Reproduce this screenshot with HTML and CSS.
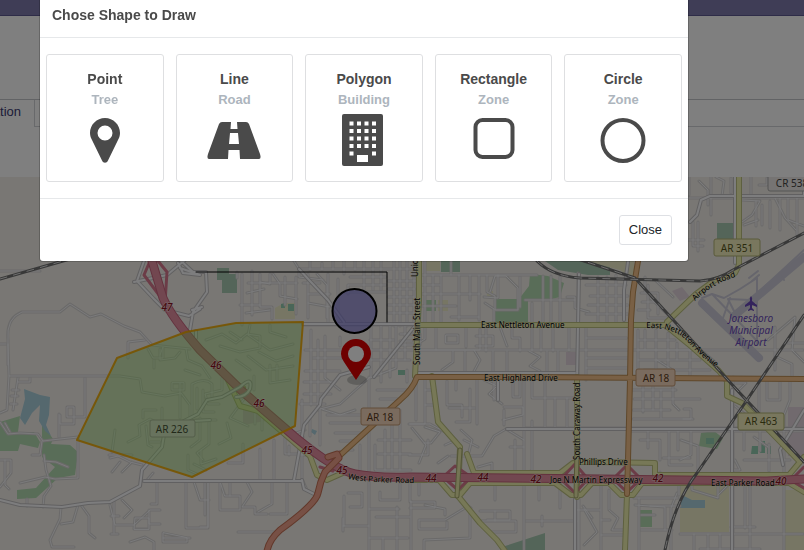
FILE: index.html
```html
<!DOCTYPE html>
<html lang="en">
<head>
<meta charset="utf-8">
<meta name="viewport" content="width=device-width, initial-scale=1">
<title>Chose Shape to Draw</title>
<link rel="stylesheet" href="styles.css">
</head>
<body>
<div class="page">
  <header class="topbar"></header>
  <div class="heading"></div>
  <nav class="tabs"><a class="tab" href="#map">ation</a><span class="tab-rest"></span></nav>
  <main class="map-wrap" id="map">
    <svg class="map" viewBox="0 177 804 373" preserveAspectRatio="xMinYMin slice" role="img" aria-label="Street map of Jonesboro">
      <defs>
        <path id="minor" d="M0 271H40M0 344H6M8 365V340Q6 318 22 312H60L70 304L90 317L101 314L124 326L140 332L152 345L190 349M128 358V342L145 340M8 344L9 376H120L140 379L142 392L165 396L181 393L190 405V432M85 378V417H67V407H74V424H60V415M59 414V437M9 376L7 410L0 413M18 378L13 410M18 382H30V378M12 390H19M11 396H18M10 404H17M0 422L8 434L20 433L38 434L43 441M5 423L10 432M43 441L60 439L78 437M78 437V478L55 479L45 477L20 483M32 455L40 455L42 441M44 455L46 470L51 486L44 496L43 507M44 461L56 462L68 467M0 460H11V473L0 487M5 460V485L9 489M27 499V506M61 507L60 519L50 540L52 547H74M61 524L73 522L78 505M81 505L89 516V533L95 538M110 458L118 456L130 462L142 465M109 455H132M132 462L122 472M112 472L120 462M115 430L112 452M114 500V533M110 505L115 525H134L150 510H160M111 516H119M111 534H118M122 500L132 510L124 518M134 529L135 518H149V529ZM149 510V524H160M130 542L145 537L154 542V550M157 482V504H151M163 538H190M163 533V542H187V538ZM147 480L153 473M186 482V528H208V482M194 482L200 500H209M205 482V515M150 442H160M143 418V410H156M162 408V425L150 419L139 425L140 436L128 442M146 426L148 445L152 447M172 383V390H184V383ZM180 383V418M192 384V416M192 384Q205 377 212 384V398M197 388V409M203 390V412H214M154 360V368M148 349L153 358H163V347L160 355M160 349V360L175 358L180 352M186 349L188 360L202 366L210 378M185 370L200 375M206 340L222 334L236 343L247 334L260 336V348L240 352L220 346M230 332L242 340M250 325L248 335L270 350L293 344M270 325V332L286 337M259 352L276 361L293 356M248 356L266 370L293 366M270 365V383L290 380M277 365V380M236 360L250 370M254 376V390M222 378V390L205 394L208 404H219M244 399L230 418L248 426M255 404V424M262 409V430M227 423L231 438L219 444M195 420H216M200 418V440L191 447M209 422V444L197 453L203 460M188 455V470L197 474M201 450V464L216 459M194 464L206 470M237 272V278M242 274V325M252 271V315M260 274V307H272V319M270 274V284L260 282M248 283H297M247 293L264 289M273 274L280 284V296L297 299M285 277V305M296 277V314M240 305H260M246 313L270 310M308 274V318M303 283H320M308 294H330M308 303L330 307M317 274L327 285V318M328 274V325M338 279V325M348 285V294M303 325H414M394 261V326M400 261V326M407 261V326M414 261V326M388 281H416M388 289H415M388 297H414M388 305H414M388 313H414M300 269H417M294 261L299 269L299 277L323 280M310 261V270M322 263V270M333 261V270M344 261V274M355 261V270M364 261V290M373 261V290M381 261V290M350 277H386M348 285H386M344 292H386M371 325V377M381 325V382M390 325V377M396 325V368L370 378M405 325V360M311 330V405M318 340V410M325 336V378M305 350H350M313 358H342M305 371H340M304 382H335M304 394H331M300 404H325M340 337V346M370 340H394M371 350H400M371 360H410M377 390H408M380 399H401M370 377L340 404L320 409M369 377V550M325 378L340 390M310 418V436M320 400V445M302 400L302 480M290 435L305 430M278 428L287 437H303M285 438V454H303M289 446V455M300 455H310M243 444V463H228M260 449V480M274 440V480M207 481H303M303 481L307 490L318 496M208 482V527H200M220 482V510H240V496H225ZM230 482V496M247 482L252 492L242 507H255V514H267M272 482V504L258 512M287 482V514H270M238 532H276M322 409L340 415L355 410M327 415H368M330 423H365M335 433H361M340 441H358M345 450H353M360 445V470M348 493H362V507H350M344 496V526M375 445V470H411M385 430V470M392 415V470M400 410V470M378 440H411M378 454H411M380 492V500H400V484M369 509H399M376 517H410M343 526H369M343 518V531M369 538H408M383 538V550M397 507V550M411 501V550"/>
        <path id="minor-east" d="M419 275H537M425 261V324M433 275V324M441 275V325M451 261V275M459 275V320M470 275V300M479 275V320M419 285H440M419 294H480M419 306H456M451 317H479M484 297L498 298V275M487 275V292L495 296V310H518V288L506 276H495L490 292M520 277V307M485 303L494 309V323M400 334H420V345H400M400 341H412M400 350H416M425 327V339L414 346M419 350H480V329M436 327V350M446 335H458V343H446ZM466 327V347M476 336H493V346H476M486 327V351M500 327L507 346M512 327V338H520V351M532 327V351M541 327V351M553 327V351M414 350H803M567 297H575V308L589 312M560 277V324M551 276V324M543 276V324M532 303V324M525 300H575M569 327V351M586 327V380M598 277V325M607 277V325M616 275V325M578 273V550M586 285H626M590 296H628M588 305H628M586 314H628M586 338H627M586 358H629M586 368H628M453 351V362L442 370M465 351V375M474 350L480 360L472 375M493 351V375M507 351V375M529 351L540 357L530 366L540 371V376M547 351V375M558 351V375M407 370V382M425 378V424H409M416 382V420M425 390H435M425 405H436M410 424H430M430 424L445 432M447 381V405H462V417M449 408H475M470 389V422H456M456 380V390M477 377V424M484 380L497 386L489 394L502 404M494 378V400M504 410V425M504 407H523V415L503 420M513 380V397H520V378M524 377V550M532 377V398H576M525 428H803M524 440L506 429L494 436L482 456H451M532 421V470L524 477M524 447H510M515 440V470M545 378V427M555 398V427M567 398V427M425 427L440 432L431 443H424M412 428L426 445L419 463M409 455H428V440M445 445L456 440M461 430L472 440L469 452M464 440L478 447M438 463L448 456M478 467L492 463V475M410 483V502H435V508H410M419 483V495M425 505L445 509V515M495 483V500M539 483V500M560 483V508M419 520H445L465 508M419 520V529H447V522M424 550V540L470 538V509M460 500L471 508M480 511H510V520H487M480 521H516V532H490M495 511V521M526 521H577M542 516V526M577 510H600M579 494V550M584 509L597 532L584 545M583 506L592 518M648 285V318H667M641 293H658V314M650 298L668 315M642 302H658M655 280L673 297M645 277V292M638 310H650M638 330V375M645 330V350M656 330V378M668 333V378M677 343V360M690 350V378M638 340H675M638 350H701L715 362M638 360H700M657 360L671 369M644 370H710M632 390H676M634 399H700M633 410H670M633 419H693M643 382V412M653 386V410M661 390V418M673 380V404L679 410M684 409H691V419H683M631 431H803M678 431V450M691 431V455L680 460M640 440H660V460M648 430V448M669 431V465H692M681 440L698 446V470M663 458H690M660 472V482M634 498H678M639 498V550M650 506H680M641 515H655M641 530H672M677 493L671 508V550M679 484V495M692 483V490L718 498V483M733 377V550M735 383H746L738 391M735 406L748 417V428M759 378V428M767 378V400H780V382M790 378V400L784 415V550M735 460L740 470H733M735 475L728 485L718 495M731 527H755M745 483V528M760 430V451M769 444V471M744 432V450M754 437L768 447M744 460H790M680 534H803M694 534V550M708 534V550M720 534V550M750 485V550M700 549H760M601 483V550M609 510L618 518L612 530H623M601 520H610M601 535H625M609 490V509M635 505L665 507V530M768 340L795 317L792 350L804 362M777 357L792 364V379M788 343H804M775 327V370M689 177V195M699 181L708 190V205M711 177V215M716 177L724 181L722 196M731 178V193M688 198H804M751 177V198M759 185H767V178M775 198L785 218L796 230M780 198V230M788 198V220L804 226M797 198V235M742 200L760 201L752 215L742 222M756 201V226M744 225L758 220M762 205V225M770 201V228M693 222V246H703M698 222V251M688 240H704"/>
        <path id="streets" d="M144 261L137 281L154 299L165 310L189 316L200 309M134 282L167 275L185 260M178 263L183 273L200 275L180 268M180 260L193 272L206 272L207 292L193 312L190 330M303 324L415 324M299 269L310 281L328 300L344 322M196 331V338M192 310L202 307M414 327L374 377M294 480L304 425L320 405L321 399L340 375L369 367M302 480L304 489L318 496M144 481H302M0 500L20 505L62 507L88 503L110 502L140 486L142 470L162 447L164 435M193 421L210 420M545 378H577M507 429H804M415 373H575M575 497V550M732 390V550M498 377V400M735 177V263M690 222L697 215L701 200L710 196H804V188M579 274L577 380M628 262L624 290V320M804 410L780 450L783 465"/>
        <path id="yellow-roads" d="M419 261V300L415 376M419 325H665L692 347L719 371L727 381V396L742 403L760 421L800 462M667 322L696 294L715 280L735 273L739 265V177M432 376L438 422L460 447L458 496L480 523L497 540L505 551M577 377V497M577 462H600L655 463V477M467 454L474 473H560L573 463M410 480H439L452 495H460L470 483H555L571 495H581L592 483H609L621 495H633L642 483H789L804 492M655 475H789L804 457M627 494L625 550M243 388L228 380L240 406L258 411L310 456L317 475L327 480L345 472"/>
      </defs>
      <rect class="land" y="177" width="804" height="373"/>
      <g class="park">
        <path d="M0 422L20 416L18 432H34L40 442L38 448L20 444L18 451L0 451ZM42 423L53 439L51 444L70 445L78 452L75 475L58 478L36 498L17 499V490L36 488L55 467L42 457Z"/>
        <path d="M494 299H519L529 286L530 274L548 276L564 283L560 297L547 300L528 300V322H494Z"/>
        <path d="M701 433L714 431L723 438L717 449L699 446ZM424 300H436V311H424ZM638 510H652V527H638Z"/>
      </g>
      <g class="wood"><path d="M217 268H229V274H237V293H222V280H217ZM441 261H460V272H441ZM717 223H736V241H717ZM545 261H610V275L588 275L558 270ZM505 546L545 533V550H505Z"/></g>
      <g class="field"><path d="M275 308L284 303H295V319H275ZM426 261H440V271H426ZM438 300H448V311H438ZM487 291H493V297H487ZM680 485H729V532H680ZM586 261H634V281L620 270ZM785 490H804V550H785Z"/></g>
      <g class="water"><path d="M24 389L40 395L50 397L49 415L46 425L51 436L45 431L39 421L40 405L32 413L25 425L20 418L25 399ZM682 495L692 500H705V508H680ZM312 429L317 431L315 435L311 432Z"/></g>
      <g class="pitch"><path d="M281 304L285 303V308H281ZM288 304H294V311H288ZM398 370H405V375H398ZM752 446H758V454H751ZM760 441H765V453H760ZM767 446H771V454H767ZM706 438H714V444H706Z"/></g>
      <g class="retail"><path d="M243 405L265 409L266 421L243 425ZM566 352H578V365H566ZM672 291L682 287L690 297L680 301ZM788 407H804V456H788Z"/></g>
      <use class="minor-case" href="#minor"/><use class="minor-case" href="#minor-east"/>
      <use class="minor-line" href="#minor"/><use class="minor-line" href="#minor-east"/>
      <g class="runway">
        <path class="runway-main" d="M804 257L734 316M702 303L759 358"/>
        <path class="taxiway" d="M702 298L712 294L724 298L740 289L757 278V345M804 250L750 300L728 299L737 317M723 318L730 298M700 305L756 358M712 294L760 344M749 278L758 271M752 281L759 275M779 273L784 280"/>
      </g>
      <use class="street-case" href="#streets"/><use class="street-line" href="#streets"/>
      <use class="yellow-case" href="#yellow-roads"/><use class="yellow-line" href="#yellow-roads"/>
      <g class="ramp"><path d="M150 261L144 275L165 303L167 272L158 261M443 477L455 466L471 477L458 490ZM561 479L575 464L588 479L575 493ZM613 479L627 465L641 479L627 492ZM792 479L804 467M792 481L804 488M320 459L340 452L333 471L320 467"/></g>
      <path class="motor-case" d="M152 261L163 298Q172 318 200 350L243 392L295 437Q335 470 355 474T410 477L600 479L767 481L804 479"/>
      <path class="motor-line" d="M152 261L163 298Q172 318 200 350L243 392L295 437Q335 470 355 474T410 477L600 479L767 481L804 479"/>
      <path class="orange-case" d="M638 261L633 292L631 320L630 380L628 460L627 494M804 379L520 377H417Q413 389 400 400L337 458"/>
      <path class="orange-line" d="M638 261L633 292L631 320L630 380L628 460L627 494M804 379L520 377H417Q413 389 400 400L337 458"/>
      <path class="trunk-case" d="M328 457L337 454L339 458L325 472Q320 482 318 493T280 530Q269 540 267 551"/>
      <path class="trunk-line" d="M328 457L337 454L339 458L325 472Q320 482 318 493T280 530Q269 540 267 551"/>
      <path class="cross-case" d="M460 450L457 496M577 450L576 496"/><path class="cross-line" d="M460 450L457 496M577 450L576 496"/>
      <path class="loop-case" d="M180 423L198 414L207 400L222 397L240 387Q253 375 250 389Q246 397 236 397"/><path class="loop-line" d="M180 423L198 414L207 400L222 397L240 387Q253 375 250 389Q246 397 236 397"/>
      <g class="rail"><path id="rail" d="M0 279L70 259M537 261Q552 276 580 278L700 281Q718 280 733 270L804 233M575 258L635 278L737 390L804 462M804 315L747 400L697 473Q675 501 665 550"/><use class="rail-dash" href="#rail"/></g>

      <path class="zone" d="M303 322L236 323L186 332L117 358L77 440L192 477L295 426Z"/>
      <path class="drawn-line" d="M196 272H387V322"/>
      <circle class="drawn-circle" cx="354.500" cy="311" r="22"/>
      <ellipse class="pin-shadow" cx="357" cy="380" rx="10" ry="5"/>
      <path class="pin" d="M356 380L344 362Q341 358 341 354A15 15 0 0 1 371 354Q371 358 368 362Z"/><circle class="pin-hole" cx="356" cy="354" r="8"/>

      <g class="shield green"><rect x="150" y="420" width="45" height="17" rx="2"/><text x="172" y="433">AR 226</text></g>
      <g class="shield yellow"><rect x="714" y="239" width="46" height="17" rx="2"/><text x="737" y="252">AR 351</text><rect x="738" y="413" width="46" height="17" rx="2"/><text x="761" y="425">AR 463</text></g>
      <g class="shield orange"><rect x="361" y="408" width="39" height="17" rx="2"/><text x="380" y="421">AR 18</text><rect x="636" y="369" width="39" height="17" rx="2"/><text x="656" y="382">AR 18</text></g>
      <g class="shield gray"><rect x="768" y="174" width="46" height="17" rx="2"/><text x="792" y="187">CR 538</text></g>
      <g class="exit"><text x="167" y="311">47</text><text x="216" y="369">46</text><text x="259" y="407">46</text><text x="307" y="454">45</text><text x="342" y="474">45</text><text x="431" y="482">44</text><text x="483" y="481">44</text><text x="536" y="483">42</text><text x="658" y="482">42</text><text x="781" y="485">40</text></g>
      <g class="road-name">
        <path id="airport-way" d="M695 301Q716 281 740 276" fill="none" stroke="none"/>
        <path id="nettleton-way" d="M646 328Q675 327 688 342Q702 359 724 372" fill="none" stroke="none"/>
        <path id="parker-way" d="M348 479Q370 483 420 483" fill="none" stroke="none"/>
        <text x="481" y="328">East Nettleton Avenue</text><text x="484" y="381">East Highland Drive</text>
        <text x="579" y="465">Phillips Drive</text><text x="550" y="483">Joe N Martin Expressway</text><text x="711" y="486">East Parker Road</text>
        <text><textPath href="#parker-way">West Parker Road</textPath></text>
        <text><textPath href="#airport-way">Airport Road</textPath></text>
        <text><textPath href="#nettleton-way">East Nettleton Avenue</textPath></text>
        <text transform="translate(420 365) rotate(-90)">South Main Street</text>
        <text transform="translate(418 277) rotate(-90)">Union</text>
        <text transform="translate(580 460) rotate(-90)">South Caraway Road</text>
      </g>
      <path class="plane" d="M751 296Q753 298 752 301L757 305V307L752 305V308L754 310V311L751 310L748 311V310L750 308V305L745 307V305L750 301Q749 298 751 296Z"/>
      <g class="airport"><text x="751" y="322">Jonesboro</text><text x="751" y="334">Municipal</text><text x="751" y="346">Airport</text></g>
    </svg>
  </main>
</div>

<div class="backdrop">
  <section class="modal" role="dialog" aria-modal="true" aria-labelledby="modal-title">
    <header class="modal-header"><h1 id="modal-title">Chose Shape to Draw</h1></header>
    <div class="modal-body">
      <button class="card" type="button"><strong>Point</strong><small>Tree</small>
        <svg class="icon" viewBox="0 0 54 54" aria-hidden="true"><path fill-rule="evenodd" d="M27 5C18.700 5 12 11.700 12 20C12 23 13 25 14 27L24 47.500C25.200 50.500 28.800 50.500 30 47.500L40 27C41 25 42 23 42 20C42 11.700 35.300 5 27 5ZM27 12.500A7.500 7.500 0 1 1 27 27.500A7.500 7.500 0 1 1 27 12.500Z"/></svg></button>
      <button class="card" type="button"><strong>Line</strong><small>Road</small>
        <svg class="icon" viewBox="0 0 54 54" aria-hidden="true"><path fill-rule="evenodd" d="M15 9H39Q41 9 42 11L53 41Q54.500 46 52 46H2Q-.500 46 1 41L12 11Q13 9 15 9ZM24 9L23.500 16H30.500L30 9ZM23 20L22 31H32L31 20ZM21.500 37L21 46H33L32.500 37Z"/></svg></button>
      <button class="card" type="button"><strong>Polygon</strong><small>Building</small>
        <svg class="icon" viewBox="0 0 54 54" aria-hidden="true"><rect x="5" y="1" width="41" height="52" rx="2"/><path class="windows" d="M12.500 8.500h4v4h-4zM20 8.500h4v4h-4zM27.500 8.500h4v4h-4zM35 8.500h4v4h-4zM12.500 16h4v4h-4zM20 16h4v4h-4zM27.500 16h4v4h-4zM35 16h4v4h-4zM12.500 23.500h4v4h-4zM20 23.500h4v4h-4zM27.500 23.500h4v4h-4zM35 23.500h4v4h-4zM12.500 31h4v4h-4zM20 31h4v4h-4zM27.500 31h4v4h-4zM35 31h4v4h-4zM12.500 38.500h4v4h-4zM35 38.500h4v4h-4zM20 42h11v7h-11z"/></svg></button>
      <button class="card" type="button"><strong>Rectangle</strong><small>Zone</small>
        <svg class="icon" viewBox="0 0 54 54" aria-hidden="true"><rect class="outline" x="8.500" y="7" width="37" height="37" rx="7"/></svg></button>
      <button class="card" type="button"><strong>Circle</strong><small>Zone</small>
        <svg class="icon" viewBox="0 0 54 54" aria-hidden="true"><circle class="outline" cx="27" cy="27.500" r="20.500"/></svg></button>
    </div>
    <footer class="modal-footer"><button class="close" type="button">Close</button></footer>
  </section>
</div>
</body>
</html>
```
FILE: styles.css
```css
* { box-sizing: border-box; }
body {
  margin: 0;
  font-family: "Liberation Sans", Arial, sans-serif;
  background: #fff;
  overflow: hidden;
}
.page { min-height: 100vh; display: flex; flex-direction: column; }
.topbar { height: 16px; background: #7e7aac; border-bottom: 1px solid #5d5990; }
.heading { height: 83px; }
.tabs {
  display: flex;
  height: 28px;
  margin-bottom: 50px;
  border-top: 1px solid #c4c6ca;
}
.tab {
  display: flex;
  justify-content: flex-end;
  width: 35px;
  padding: 4px 13px 0 0;
  overflow: hidden;
  border-right: 1px solid #d0d2d6;
  font-size: 13px;
  line-height: 15px;
  color: #3a3a72;
  text-decoration: none;
}
.tab-rest { flex: 1; border-bottom: 1px solid #d0d2d6; }
.map-wrap { flex: 1; min-height: 0; }
.map {
  display: block;
  width: 100%;
  font-family: "Noto Sans", "Open Sans", sans-serif;
}

.map path, .map use { fill: none; stroke-linejoin: round; stroke-linecap: round; }
.land { fill: #f2efe9; }
.map .park path { fill: #b2dab0; }
.map .wood path { fill: #a9cab2; }
.map .field path { fill: #eeedc8; }
.map .water path { fill: #aad0dc; }
.map .pitch path { fill: #93cdb0; }
.map .retail path { fill: #e3d4dc; }
.runway { stroke: #cccbd8; }
.runway-main { stroke-width: 8; }
.taxiway { stroke-width: 2; }
.minor-case { stroke: #d6d4d3; stroke-width: 3; }
.minor-line { stroke: #f6f6f8; stroke-width: 1; }
.street-case { stroke: #c3c1c2; stroke-width: 4; }
.street-line { stroke: #fafafc; stroke-width: 2; }
.yellow-case { stroke: #bcc080; stroke-width: 6; }
.yellow-line { stroke: #eff0ae; stroke-width: 4; }
.ramp { stroke: #d8788e; stroke-width: 3; }
.motor-case { stroke: #c7657d; stroke-width: 9; }
.motor-line { stroke: #e48ea0; stroke-width: 7; }
.orange-case { stroke: #bd8e55; stroke-width: 6; }
.orange-line { stroke: #f2c08a; stroke-width: 4; }
.trunk-case { stroke: #c47054; stroke-width: 7; }
.trunk-line { stroke: #eea08a; stroke-width: 5; }
.cross-case { stroke: #a8ab70; stroke-width: 5; }
.cross-line { stroke: #e9e9a8; stroke-width: 3; }
.loop-case { stroke: #bbb9bb; stroke-width: 4; }
.loop-line { stroke: #fafafc; stroke-width: 2; }
.rail { stroke: #707070; stroke-width: 3; }
.rail-dash { stroke: #ddd; stroke-width: 1; stroke-dasharray: 7 7; }

.map .zone { fill: #90d85e; fill-opacity: .4; stroke: #f0a800; stroke-opacity: .9; stroke-width: 2; }
.drawn-line { stroke: #000; stroke-width: 1; }
.drawn-circle { fill: #7770d0; fill-opacity: .65; stroke: #000; stroke-width: 2; }
.pin-shadow { fill: #000; fill-opacity: .2; }
.map .pin { fill: #dc0000; }
.pin-hole { fill: #fff; }

.shield text { font-size: 10px; text-anchor: middle; }
.green rect { fill: #d0e6bd; stroke: #a8bc93; }
.green text { fill: #455234; }
.yellow rect { fill: #f2efbd; stroke: #b4b474; }
.yellow text { fill: #55551c; }
.orange rect { fill: #f5d6bd; stroke: #c59a72; }
.orange text { fill: #593b20; }
.gray rect { fill: #ece9e6; stroke: #aaa; }
.gray text { fill: #444; }
.exit text { font-size: 10px; font-weight: 500; font-style: italic; text-anchor: middle; fill: #8c1020; stroke: #f2efe9; stroke-width: 1; stroke-opacity: .7; paint-order: stroke; }
.road-name text { font-size: 8px; fill: #000; stroke: #f2efd4; stroke-width: 1; stroke-opacity: .6; paint-order: stroke; }
.airport text { font-size: 10px; font-style: italic; text-anchor: middle; fill: #6848b8; }
.map .plane { fill: #6848b8; }

.backdrop {
  position: fixed;
  inset: 0;
  background: rgba(0, 0, 0, .5);
}
.modal {
  margin: -7px 116px 0 40px;
  background: #fff;
  box-shadow: 0 0 0 1px rgba(0, 0, 0, .2);
  border-radius: 3px;
  color: #4a4a4a;
}
.modal-header { padding: 12px; border-bottom: 1px solid #e6e8ea; }
.modal-header h1 { margin: 0; font-size: 14px; line-height: 20px; }
.modal-body {
  display: grid;
  grid-template-columns: repeat(5, minmax(0, 1fr));
  gap: 12px;
  padding: 16px 6px;
}
.card {
  display: flex;
  flex-direction: column;
  align-items: center;
  padding: 14px 0;
  background: #fff;
  border: 1px solid #dedfe1;
  border-radius: 3px;
  color: #4a4a4a;
  font-family: inherit;
}
.card strong { font-size: 14px; line-height: 20px; }
.card small { font-size: 13px; font-weight: 700; line-height: 22px; color: #adb5bd; }
.icon { width: 54px; height: 54px; margin-top: 2px; fill: #4a4a4a; }
.windows { fill: #fff; }
.outline { fill: none; stroke: #4a4a4a; stroke-width: 4; }
.modal-footer { display: flex; justify-content: flex-end; padding: 16px; border-top: 1px solid #e6e8ea; }
.close {
  padding: 0 9px;
  background: #fff;
  border: 1px solid #dee0e4;
  border-radius: 3px;
  color: #212529;
  font-family: inherit;
  font-size: 13px;
  line-height: 28px;
}
```
